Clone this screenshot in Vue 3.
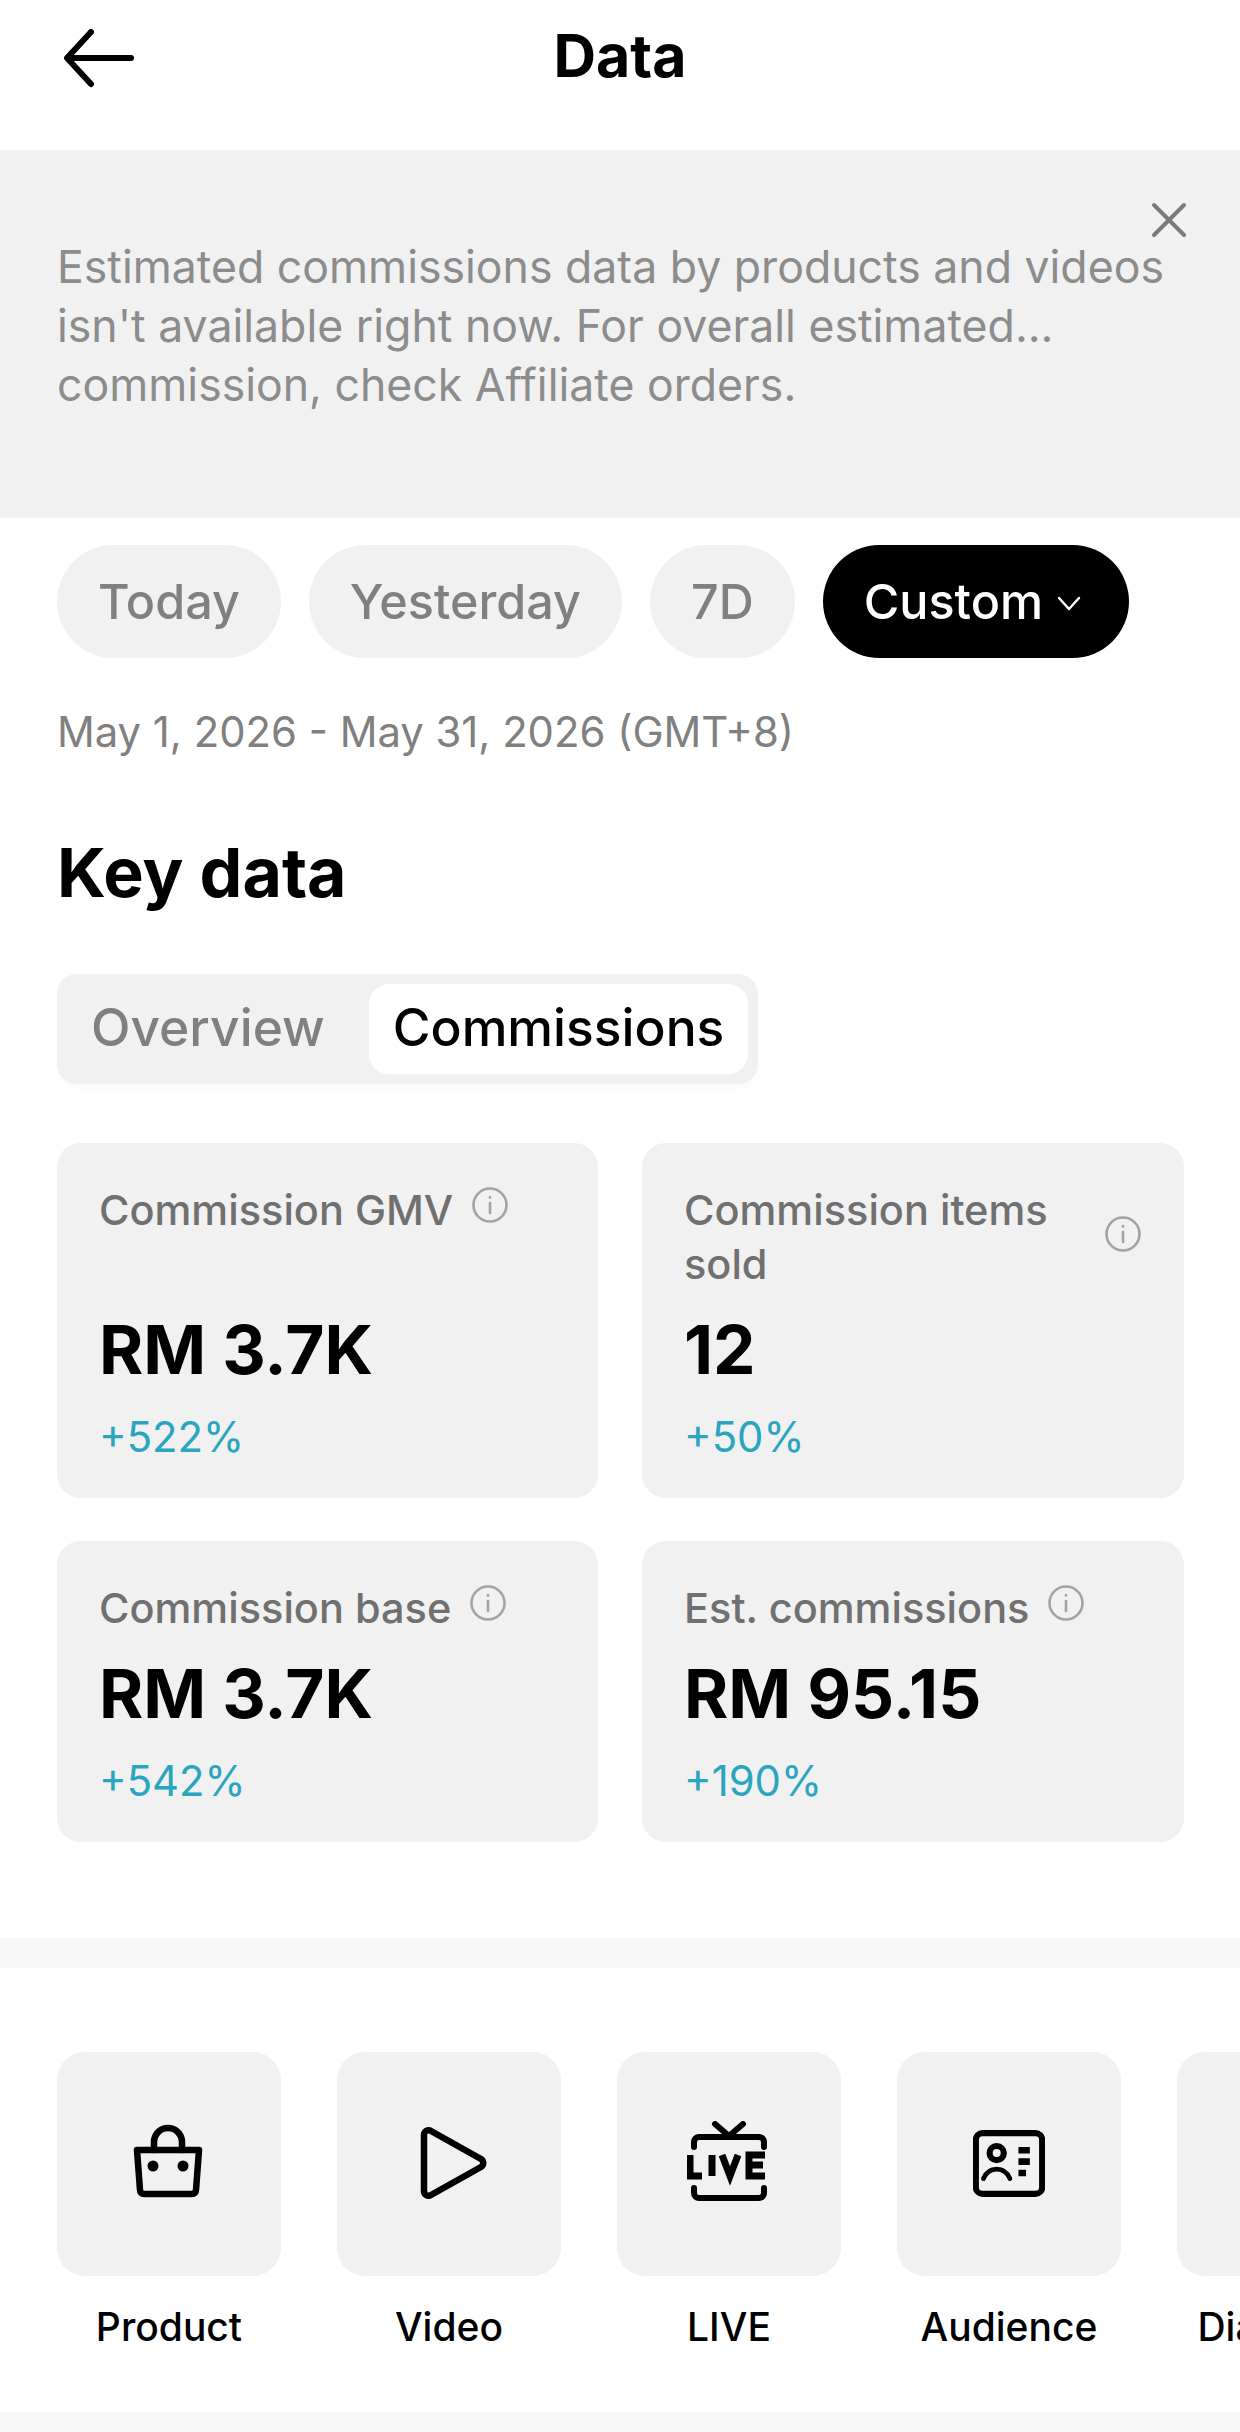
<script setup>
const chips = ['Today', 'Yesterday', '7D']

const cards = [
  { label: 'Commission GMV', value: 'RM 3.7K', change: '+522%' },
  { label: 'Commission items sold', value: '12', change: '+50%', wide: true },
  { label: 'Commission base', value: 'RM 3.7K', change: '+542%' },
  { label: 'Est. commissions', value: 'RM 95.15', change: '+190%' }
]

const tools = ['Product', 'Video', 'LIVE', 'Audience', 'Diagnosis']
</script>

<template>
  <div class="page">
    <header class="top-bar">
      <svg class="back" viewBox="0 0 72 60" fill="none" stroke="#000" stroke-width="6" stroke-linecap="round" stroke-linejoin="round">
        <path d="M69 30H6" />
        <path d="M29 4L5 30l24 26" />
      </svg>
      <h1>Data</h1>
    </header>

    <section class="notice">
      <svg class="notice-close" viewBox="0 0 36 36" fill="none" stroke="#7a7a7a" stroke-width="4" stroke-linecap="round">
        <path d="M3 3l30 30M33 3L3 33" />
      </svg>
      <p>Estimated commissions data by products and videos<br />isn't available right now. For overall estimated...<br />commission, check Affiliate orders.</p>
    </section>

    <div class="chips">
      <span v-for="c in chips" :key="c" class="chip">{{ c }}</span>
      <span class="chip active">
        Custom
        <svg viewBox="0 0 24 15" fill="none" stroke="#fff" stroke-width="2.4" stroke-linecap="round" stroke-linejoin="round"><path d="M2 2l10 11L22 2" /></svg>
      </span>
    </div>

    <div class="date-range">May 1, 2026 - May 31, 2026 (GMT+8)</div>

    <h2 class="section-title">Key data</h2>

    <div class="tabs">
      <span class="tab">Overview</span>
      <span class="tab selected">Commissions</span>
    </div>

    <div class="cards">
      <div v-for="card in cards" :key="card.label" class="card">
        <div class="card-label" :class="{ spread: card.wide }">
          <span>{{ card.label }}</span>
          <svg class="info" viewBox="0 0 38 38" fill="none" stroke="#a3a3a3" stroke-width="2.6" stroke-linecap="round">
            <circle cx="19" cy="19" r="16.5" />
            <path d="M19 17v10" />
            <path d="M19 11v.6" />
          </svg>
        </div>
        <div class="card-value">{{ card.value }}</div>
        <div class="card-change">{{ card.change }}</div>
      </div>
    </div>

    <div class="divider"></div>

    <div class="tools">
      <div v-for="(tool, i) in tools" :key="tool" class="tool">
        <div class="tool-icon">
          <svg v-if="i === 0" class="ic-bag" viewBox="0 0 72 76" fill="none" stroke="#000" stroke-width="6.5" stroke-linecap="round" stroke-linejoin="round">
            <path d="M22 26V18a14 14 0 0 1 28 0v8" />
            <path d="M5 26h62l-3 40a4 4 0 0 1-4 4H12a4 4 0 0 1-4-4z" />
            <circle cx="21" cy="42" r="5.5" fill="#000" stroke="none" />
            <circle cx="51" cy="42" r="5.5" fill="#000" stroke="none" />
          </svg>
          <svg v-else-if="i === 1" class="ic-play" viewBox="0 0 72 76" fill="none" stroke="#000" stroke-width="6.5" stroke-linecap="round" stroke-linejoin="round">
            <path d="M6 10c0-4 4-6 7-4l50 28c3 2 3 6 0 8L13 70c-3 2-7 0-7-4z" />
          </svg>
          <svg v-else-if="i === 2" class="ic-live" viewBox="0 0 84 84" fill="none" stroke="#000" stroke-width="6" stroke-linecap="round" stroke-linejoin="round">
            <path d="M28 3l14 12L56 3" />
            <path d="M7 26v-5a5 5 0 0 1 5-5h60a5 5 0 0 1 5 5v5" />
            <path d="M7 67v5a5 5 0 0 0 5 5h60a5 5 0 0 0 5-5v-5" />
            <path d="M3 34v21h12M25 34v21M35 34l8 21 8-21M78 34H62v21h16M62 44h14" stroke-width="7" stroke-linecap="butt" stroke-linejoin="miter" />
          </svg>
          <svg v-else-if="i === 3" class="ic-card" viewBox="0 0 76 70" fill="none" stroke="#000" stroke-width="6.5" stroke-linecap="round" stroke-linejoin="round">
            <rect x="3" y="3" width="70" height="64" rx="7" />
            <circle cx="25" cy="24" r="7.5" />
            <path d="M11 51c3-7 8-10 14-10s11 3 14 10" stroke-width="5" />
            <path d="M48 21h12M48 33h12M48 45h8" stroke-width="7" stroke-linecap="butt" />
          </svg>
        </div>
        <span class="tool-name">{{ tool }}</span>
      </div>
    </div>

    <div class="bottom-strip"></div>
  </div>
</template>

<style>
html, body {
  margin: 0;
  background: #fff;
}
</style>

<style scoped>
.page {
  width: 1240px;
  height: 2432px;
  overflow: hidden;
  background: #fff;
  font-family: Inter, "Liberation Sans", sans-serif;
  color: #000;
}

.top-bar {
  height: 150px;
  position: relative;
  display: flex;
  justify-content: center;
  box-sizing: border-box;
  padding-top: 24px;
}

.top-bar h1 {
  margin: 0;
  font-size: 59px;
  line-height: 64px;
  font-weight: 700;
}

.back {
  position: absolute;
  left: 62px;
  top: 28px;
  width: 72px;
  height: 60px;
}

.notice {
  position: relative;
  height: 368px;
  box-sizing: border-box;
  padding: 88px 57px 0;
  background: #f1f1f1;
}

.notice p {
  margin: 0;
  font-size: 44.6px;
  line-height: 59px;
  color: #8c8c8c;
  white-space: nowrap;
}

.notice-close {
  position: absolute;
  right: 53px;
  top: 52px;
  width: 36px;
  height: 36px;
}

.chips {
  display: flex;
  gap: 28px;
  padding: 27px 57px 0;
}

.chip {
  height: 113px;
  padding: 0 41px;
  display: flex;
  align-items: center;
  gap: 14px;
  border-radius: 57px;
  background: #f1f1f1;
  font-size: 48.5px;
  font-weight: 500;
  color: #808080;
}

.chip.active {
  padding-right: 48px;
  background: #000;
  color: #fff;
}

.chip svg {
  width: 24px;
  height: 15px;
  margin-top: 4px;
}

.date-range {
  margin: 46px 57px 0;
  font-size: 41.8px;
  line-height: 56px;
  color: #808080;
}

.section-title {
  margin: 72px 57px 0;
  font-size: 68px;
  line-height: 80px;
  font-weight: 700;
}

.tabs {
  display: inline-flex;
  gap: 20px;
  margin: 62px 0 0 57px;
  padding: 10px;
  height: 110px;
  box-sizing: border-box;
  align-items: stretch;
  background: #f1f1f1;
  border-radius: 20px;
  box-shadow: 0 4px 10px rgba(0, 0, 0, 0.02);
}

.tab {
  display: flex;
  align-items: center;
  padding: 0 24px 4px;
  font-size: 51.5px;
  font-weight: 500;
  color: #808080;
}

.tab.selected {
  background: #fff;
  border-radius: 20px;
  color: #000;
}

.cards {
  display: grid;
  grid-template-columns: 541px 542px;
  grid-template-rows: 355px 301px;
  gap: 43px 44px;
  margin: 59px 56px 0 57px;
}

.card {
  display: flex;
  flex-direction: column;
  box-sizing: border-box;
  padding: 40px 42px 0;
  background: #f1f1f1;
  border-radius: 24px;
}

.card-label {
  display: flex;
  align-items: flex-start;
  gap: 18px;
  font-size: 41.5px;
  line-height: 54px;
  font-weight: 500;
  color: #707070;
}

.card-label.spread {
  align-items: center;
  justify-content: space-between;
  height: 108px;
}

.card-label.spread span {
  width: 400px;
}

.card-label.spread .info {
  margin-top: -6px;
}

.info {
  width: 38px;
  height: 38px;
  flex: none;
  margin-top: 3px;
}

.card-value {
  font-size: 67.5px;
  line-height: 80px;
  font-weight: 700;
  margin-top: auto;
}

.card-change {
  margin: 22px 0 36px;
  font-size: 41.8px;
  line-height: 50px;
  color: #2aa5bf;
}

.divider {
  height: 30px;
  margin-top: 96px;
  background: #f8f8f8;
}

.tools {
  display: flex;
  gap: 56px;
  padding: 84px 0 0 57px;
}

.tool {
  flex: none;
  width: 224px;
  display: flex;
  flex-direction: column;
  align-items: center;
}

.tool-icon {
  width: 224px;
  height: 224px;
  display: flex;
  align-items: center;
  justify-content: center;
  background: #f1f1f1;
  border-radius: 28px;
}

.ic-bag {
  width: 72px;
  height: 76px;
  margin: -4px 2px 0 0;
}

.ic-play {
  width: 72px;
  height: 76px;
  margin: -2px 0 0 9px;
}

.ic-live {
  width: 84px;
  height: 84px;
  margin-top: -2px;
}

.ic-card {
  width: 72px;
  height: 67px;
  margin-top: -2px;
}

.tool-name {
  margin-top: 27px;
  font-size: 39px;
  line-height: 48px;
  font-weight: 500;
  white-space: nowrap;
}

.bottom-strip {
  height: 20px;
  margin-top: 61px;
  background: #f8f8f8;
}
</style>
